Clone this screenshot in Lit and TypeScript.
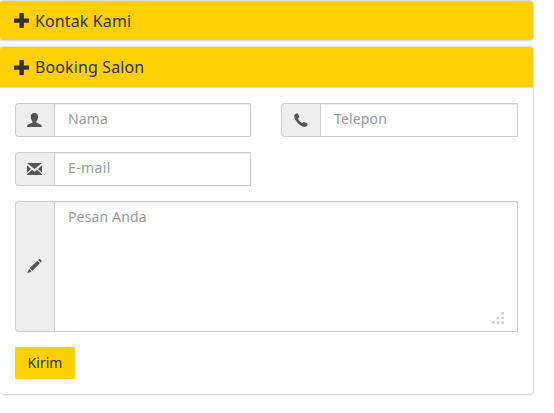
import { LitElement, html, css, svg } from "lit";
import { customElement } from "lit/decorators.js";

const GLYPHS: Record<string, unknown> = {
  plus: svg`<path d="M5.500 0H8.700Q9.200 0 9.200.5V5.100H13.500Q14 5.100 14 5.600V8.500Q14 9 13.500 9H9.200V13.500Q9.200 14 8.700 14H5.500Q5 14 5 13.500V9H.5Q0 9 0 8.500V5.600Q0 5.100.5 5.100H5V.5Q5 0 5.500 0z"/>`,
  user: svg`<path d="M7.400 0C9.900 0 11.100 1.300 11.100 3.600C11.100 5.600 10.400 7.200 9.300 8.500V9.400C9.500 9.900 10.500 10 12.500 10.900C14.200 11.600 14.800 12.200 14.800 14H0C0 12.200.5 11.600 2.200 10.900C4.200 10 5.300 9.900 5.500 9.400V8.500C4.400 7.200 3.700 5.600 3.700 3.600C3.700 1.300 4.900 0 7.400 0z"/>`,
  phone: svg`<path d="M3.400.4L4.200.3Q4.700.4 5.200 1.400L6.300 3.500Q6.500 4.100 6 4.500L5 5.400C5.500 7.100 7.600 9.300 9.400 10.100L10.300 9.100Q10.700 8.700 11.300 8.900L14 10.300Q14.700 10.700 14.500 11.400C14.100 13 13 14 11.500 13.900C6.900 13.200 1.700 7.900 1.200 3.300C1.200 1.900 2.100.8 3.400.4z"/>`,
  mail: svg`<path d="M0 1H15L7.500 7zM0 3.200L4 6.900L0 10.700zM15 3.200L11 6.900L15 10.700zM5 7.700L7.500 9.800L10 7.700L15 12.300V13H0V12.300z"/>`,
  pencil: svg`<path d="M11.100 1L11.900.2Q12.600-.3 13.300.3L14.400 1.400Q15 2.100 14.400 2.800L13.600 3.600zM10.400 1.700L12.900 4.300L5.400 11.800L2.700 9.100zM2 9.900L4.600 12.500L.2 14.200z"/>`,
};

@customElement("app-root")
export class AppRoot extends LitElement {
  static styles = css`
    :host { display: block; height: 413px; overflow: hidden; background: #fff; font-family: "Noto Sans", "Open Sans", sans-serif; font-size: 14px; color: #333; }
    * { box-sizing: border-box; }
    .group { width: 535px; margin-left: -1px; display: flex; flex-direction: column; gap: 5px; }
    .panel { border: 1px solid #ddd; border-radius: 4px; box-shadow: 0 1px 1px rgba(0, 0, 0, .05); overflow: hidden; }
    .heading { height: 39px; background: #ffd104; padding: 0 14px; display: flex; align-items: center; gap: 6px; font-size: 16px; line-height: 18px; letter-spacing: .12px; }
    .open .heading { height: 41px; border-bottom: 1px solid #ddd; }
    .glyph { display: block; flex: none; width: 14px; height: 14px; fill: #555; overflow: visible; }
    .heading .glyph { width: 15px; height: 15px; fill: #333; }
    .body { padding: 15px; display: grid; grid-template-columns: 236px 237px; column-gap: 30px; row-gap: 15px; justify-items: start; }
    .field { display: flex; width: 100%; height: 34px; }
    .message { grid-column: 1 / -1; height: 131px; }
    .addon { width: 39px; flex: none; display: flex; align-items: center; justify-content: center; padding-right: 2px; background: #eee; border: 1px solid #ccc; border-right: 0; border-radius: 4px 0 0 4px; }
    .message .glyph { margin-top: -1px; }
    .input { position: relative; flex: 1; border: 1px solid #ccc; box-shadow: inset 0 1px 1px rgba(0, 0, 0, .075); padding: 5px 12px 6px 13px; line-height: 20px; letter-spacing: .15px; color: #999; white-space: nowrap; }
    .mail .input { letter-spacing: .4px; }
    .grip { position: absolute; right: 13px; bottom: 7px; width: 12px; height: 12px; fill: #c8c8c8; }
    .send { width: 60px; height: 32px; border: 0; padding: 0 0 2px; background: #ffd104; font: inherit; color: #333; }
  `;

  private glyph(name: string) {
    return html`<svg class="glyph" viewBox="0 0 14 14">${GLYPHS[name]}</svg>`;
  }

  private field(icon: string, label: string) {
    return html`<div class="field ${icon}"><span class="addon">${this.glyph(icon)}</span><div class="input"><span>${label}</span></div></div>`;
  }

  render() {
    return html`<div class="group">
      <section class="panel"><div class="heading">${this.glyph("plus")}<span>Kontak Kami</span></div></section>
      <section class="panel open">
        <div class="heading">${this.glyph("plus")}<span>Booking Salon</span></div>
        <div class="body">
          ${this.field("user", "Nama")}${this.field("phone", "Telepon")}${this.field("mail", "E-mail")}
          <div class="field message"><span class="addon">${this.glyph("pencil")}</span>
            <div class="input"><span>Pesan Anda</span>
              <svg class="grip" viewBox="0 0 12 12"><path d="M9.300 0h2.500v2.500h-2.500zM9.300 4.700h2.500v2.500h-2.500zM9.300 9.300h2.500v2.500h-2.500zM4.700 4.700h2.500v2.500h-2.500zM4.700 9.300h2.500v2.500h-2.500zM0 9.300h2.500v2.500h-2.500z"/></svg>
            </div>
          </div>
          <button class="send">Kirim</button>
        </div>
      </section>
    </div>`;
  }
}
